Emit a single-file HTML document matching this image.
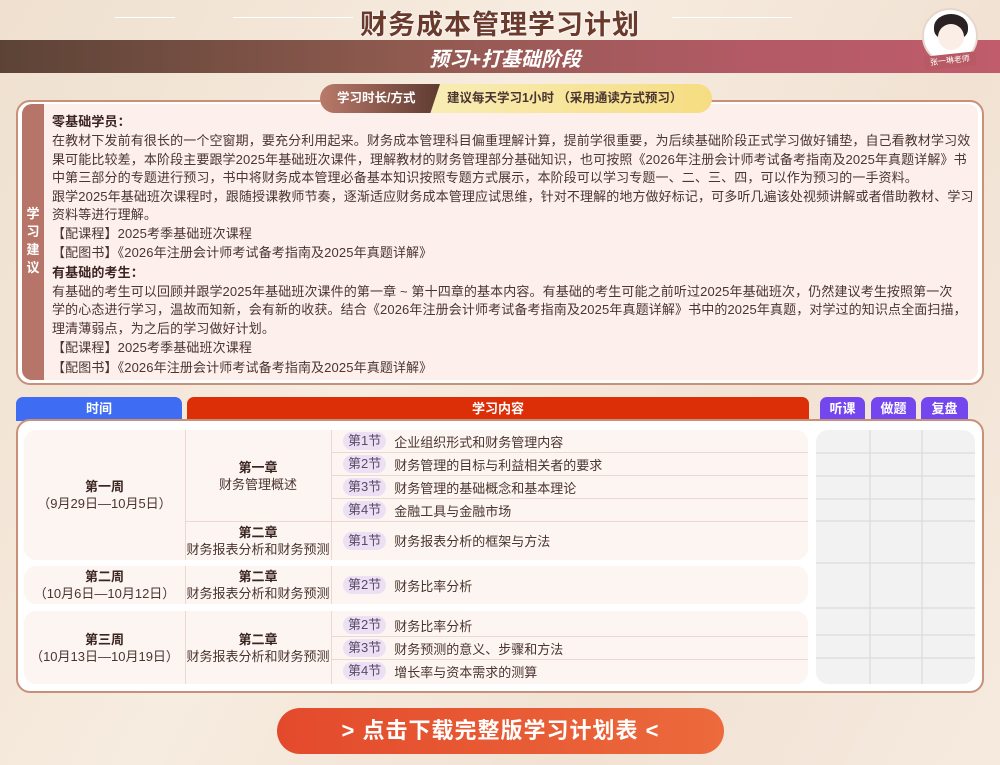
<!DOCTYPE html>
<html><head><meta charset="utf-8"><style>
*{margin:0;padding:0;box-sizing:border-box}
body{width:1000px;height:765px;overflow:hidden;position:relative;font-family:"Liberation Sans","Noto Sans CJK SC",sans-serif;background:linear-gradient(120deg,#efe0cf 0%,#f7ece0 40%,#f1e2d3 70%,#f6eadf 100%);color:#4a3530}
.a{position:absolute}
.t{position:absolute;left:52px;font-size:13px;letter-spacing:0.12px;white-space:nowrap;color:#4a3530}
.b{font-weight:bold;color:#3a2520}
.hd{position:absolute;top:397px;height:24px;border-radius:7px 7px 0 0;color:#fff;font-size:13px;font-weight:bold;text-align:center;line-height:23px}
.sec{position:absolute;left:331px;width:477px;border-bottom:1px solid #ecd8d0;font-size:13px;display:flex;align-items:center}
.tag{display:inline-block;background:#ebe0f4;color:#5c4868;border-radius:9px;padding:0 5px;height:18px;line-height:18px;margin:0 8px 0 12px;font-size:13px}
.cen{position:absolute;text-align:center;font-size:13px;line-height:17px;display:flex;flex-direction:column;justify-content:center}
</style></head><body>
<div class="a" style="left:115px;top:17px;width:60px;height:1px;background:#fff"></div>
<div class="a" style="left:233px;top:17px;width:120px;height:1px;background:#fff"></div>
<div class="a" style="left:672px;top:17px;width:120px;height:1px;background:#fff"></div>
<div class="a" style="left:350px;top:3px;width:300px;text-align:center;font-size:27px;font-weight:bold;color:#6a3a2c;letter-spacing:1px;text-shadow:0 0 2px #fff,0 0 2px #fff">财务成本管理学习计划</div>
<div class="a" style="left:0;top:40px;width:1000px;height:33px;background:linear-gradient(90deg,#5c4336 0%,#8f5a4f 40%,#b35a66 75%,#c05c6c 100%)"></div>
<div class="a" style="left:400px;top:43px;width:210px;text-align:center;font-size:20px;font-weight:bold;font-style:italic;color:#fff">预习+打基础阶段</div>
<div class="a" style="left:922px;top:8px;width:56px;height:56px;border-radius:50%;background:#fff;border:2px solid #e8d6cc;overflow:hidden">
 <div class="a" style="left:10px;top:4px;width:34px;height:26px;border-radius:50% 50% 40% 40%;background:#2a2222"></div>
 <div class="a" style="left:14px;top:14px;width:26px;height:26px;border-radius:50%;background:#fbeee6"></div>
</div>
<div class="a" style="left:924px;top:54px;width:52px;height:14px;background:#b85a64;color:#fff;font-size:8px;text-align:center;line-height:14px;border-radius:3px;transform:rotate(-6deg)">张一琳老师</div>

<div class="a" style="left:16px;top:100px;width:968px;height:285px;border:2px solid #c89078;border-radius:14px;background:#fff"></div>
<div class="a" style="left:22px;top:104px;width:956px;height:276px;border-radius:10px;background:#fdefec"></div>
<div class="a" style="left:22px;top:104px;width:22px;height:276px;border-radius:10px 0 0 10px;background:#b67568"></div>
<div class="a" style="left:22px;top:205px;width:22px;color:#fff;font-size:13px;font-weight:bold;text-align:center;line-height:18px">学<br>习<br>建<br>议</div>

<div class="a" style="left:320px;top:84px;width:392px;height:29px;border-radius:15px;background:linear-gradient(90deg,#fbf3c8,#f5dd82)"></div>
<div class="a" style="left:320px;top:84px;width:120px;height:29px;border-radius:15px 0 0 15px;background:linear-gradient(90deg,#b97a6a,#5e3a30);clip-path:polygon(0 0,100% 0,92% 100%,0 100%);color:#fff;font-size:12.5px;font-weight:bold;line-height:29px;padding-left:17px">学习时长/方式</div>
<div class="a" style="left:447px;top:84px;font-size:12.5px;font-weight:bold;line-height:29px;color:#4a3530">建议每天学习1小时 （采用通读方式预习）</div>

<div class="t b" style="top:111px">零基础学员：</div>
<div class="t" style="top:130px">在教材下发前有很长的一个空窗期，要充分利用起来。财务成本管理科目偏重理解计算，提前学很重要，为后续基础阶段正式学习做好铺垫，自己看教材学习效</div>
<div class="t" style="top:149px">果可能比较差，本阶段主要跟学2025年基础班次课件，理解教材的财务管理部分基础知识，也可按照《2026年注册会计师考试备考指南及2025年真题详解》书</div>
<div class="t" style="top:167px">中第三部分的专题进行预习，书中将财务成本管理必备基本知识按照专题方式展示，本阶段可以学习专题一、二、三、四，可以作为预习的一手资料。</div>
<div class="t" style="top:186px">跟学2025年基础班次课程时，跟随授课教师节奏，逐渐适应财务成本管理应试思维，针对不理解的地方做好标记，可多听几遍该处视频讲解或者借助教材、学习</div>
<div class="t" style="top:204px">资料等进行理解。</div>
<div class="t" style="top:223px">【配课程】2025考季基础班次课程</div>
<div class="t" style="top:242px">【配图书】《2026年注册会计师考试备考指南及2025年真题详解》</div>
<div class="t b" style="top:262px">有基础的考生：</div>
<div class="t" style="top:281px">有基础的考生可以回顾并跟学2025年基础班次课件的第一章 ~ 第十四章的基本内容。有基础的考生可能之前听过2025年基础班次，仍然建议考生按照第一次</div>
<div class="t" style="top:299px">学的心态进行学习，温故而知新，会有新的收获。结合《2026年注册会计师考试备考指南及2025年真题详解》书中的2025年真题，对学过的知识点全面扫描，</div>
<div class="t" style="top:318px">理清薄弱点，为之后的学习做好计划。</div>
<div class="t" style="top:337px">【配课程】2025考季基础班次课程</div>
<div class="t" style="top:357px">【配图书】《2026年注册会计师考试备考指南及2025年真题详解》</div>

<div class="hd" style="left:16px;width:166px;background:#3e6cf2">时间</div>
<div class="hd" style="left:187px;width:622px;background:#dc2f08">学习内容</div>
<div class="hd" style="left:820px;width:45px;background:#7446ee">听课</div>
<div class="hd" style="left:871px;width:45px;background:#7446ee">做题</div>
<div class="hd" style="left:921px;width:47px;background:#7446ee">复盘</div>

<div class="a" style="left:16px;top:419px;width:968px;height:274px;border:2px solid #c89078;border-radius:14px;background:#fff"></div>
<div class="a" style="left:24px;top:430px;width:784px;height:130px;border-radius:12px;background:#fdf5f1"></div>
<div class="a" style="left:24px;top:566px;width:784px;height:38px;border-radius:12px;background:#fdf5f1"></div>
<div class="a" style="left:24px;top:611px;width:784px;height:73px;border-radius:12px;background:#fdf5f1"></div>
<div class="a" style="left:185px;top:430px;width:1px;height:130px;background:#ecd8d0"></div>
<div class="a" style="left:331px;top:430px;width:1px;height:130px;background:#ecd8d0"></div>
<div class="a" style="left:185px;top:566px;width:1px;height:38px;background:#ecd8d0"></div>
<div class="a" style="left:331px;top:566px;width:1px;height:38px;background:#ecd8d0"></div>
<div class="a" style="left:185px;top:611px;width:1px;height:73px;background:#ecd8d0"></div>
<div class="a" style="left:331px;top:611px;width:1px;height:73px;background:#ecd8d0"></div>
<div class="a" style="left:185px;top:521px;width:623px;height:1px;background:#ecd8d0"></div>

<div class="cen" style="left:24px;top:430px;width:161px;height:130px"><b style="color:#3a2520">第一周</b>（9月29日—10月5日）</div>
<div class="cen" style="left:185px;top:430px;width:146px;height:91px"><b style="color:#3a2520">第一章</b>财务管理概述</div>
<div class="cen" style="left:185px;top:521px;width:146px;height:39px"><b style="color:#3a2520">第二章</b>财务报表分析和财务预测</div>
<div class="sec" style="top:430px;height:23px"><span class="tag">第1节</span>企业组织形式和财务管理内容</div>
<div class="sec" style="top:453px;height:23px"><span class="tag">第2节</span>财务管理的目标与利益相关者的要求</div>
<div class="sec" style="top:476px;height:23px"><span class="tag">第3节</span>财务管理的基础概念和基本理论</div>
<div class="sec" style="top:499px;height:22px;border:0"><span class="tag">第4节</span>金融工具与金融市场</div>
<div class="sec" style="top:521px;height:39px;border:0"><span class="tag">第1节</span>财务报表分析的框架与方法</div>

<div class="cen" style="left:24px;top:566px;width:161px;height:38px"><b style="color:#3a2520">第二周</b>（10月6日—10月12日）</div>
<div class="cen" style="left:185px;top:566px;width:146px;height:38px"><b style="color:#3a2520">第二章</b>财务报表分析和财务预测</div>
<div class="sec" style="top:566px;height:38px;border:0"><span class="tag">第2节</span>财务比率分析</div>

<div class="cen" style="left:24px;top:611px;width:161px;height:73px"><b style="color:#3a2520">第三周</b>（10月13日—10月19日）</div>
<div class="cen" style="left:185px;top:611px;width:146px;height:73px"><b style="color:#3a2520">第二章</b>财务报表分析和财务预测</div>
<div class="sec" style="top:614px;height:23px"><span class="tag">第2节</span>财务比率分析</div>
<div class="sec" style="top:637px;height:23px"><span class="tag">第3节</span>财务预测的意义、步骤和方法</div>
<div class="sec" style="top:660px;height:22px;border:0"><span class="tag">第4节</span>增长率与资本需求的测算</div>

<svg class="a" style="left:816px;top:430px" width="159" height="254">
<defs><clipPath id="c"><rect width="159" height="254" rx="12"/></clipPath></defs>
<g clip-path="url(#c)"><rect width="159" height="254" fill="#f2f2f2"/>
<g stroke="#dcdcdc" stroke-width="1.2">
<line x1="54" y1="0" x2="54" y2="254"/><line x1="106" y1="0" x2="106" y2="254"/>
<line x1="0" y1="23" x2="159" y2="23"/><line x1="0" y1="46" x2="159" y2="46"/><line x1="0" y1="69" x2="159" y2="69"/><line x1="0" y1="91" x2="159" y2="91"/><line x1="0" y1="133" x2="159" y2="133"/><line x1="0" y1="178" x2="159" y2="178"/><line x1="0" y1="205" x2="159" y2="205"/><line x1="0" y1="228" x2="159" y2="228"/>
</g></g></svg>

<div class="a" style="left:277px;top:708px;width:447px;height:46px;border-radius:23px;background:linear-gradient(90deg,#e34a2c,#ec6a3c);color:#fff;font-size:22px;font-weight:bold;text-align:center;line-height:46px;letter-spacing:1px">&gt; 点击下载完整版学习计划表 &lt;</div>
</body></html>
